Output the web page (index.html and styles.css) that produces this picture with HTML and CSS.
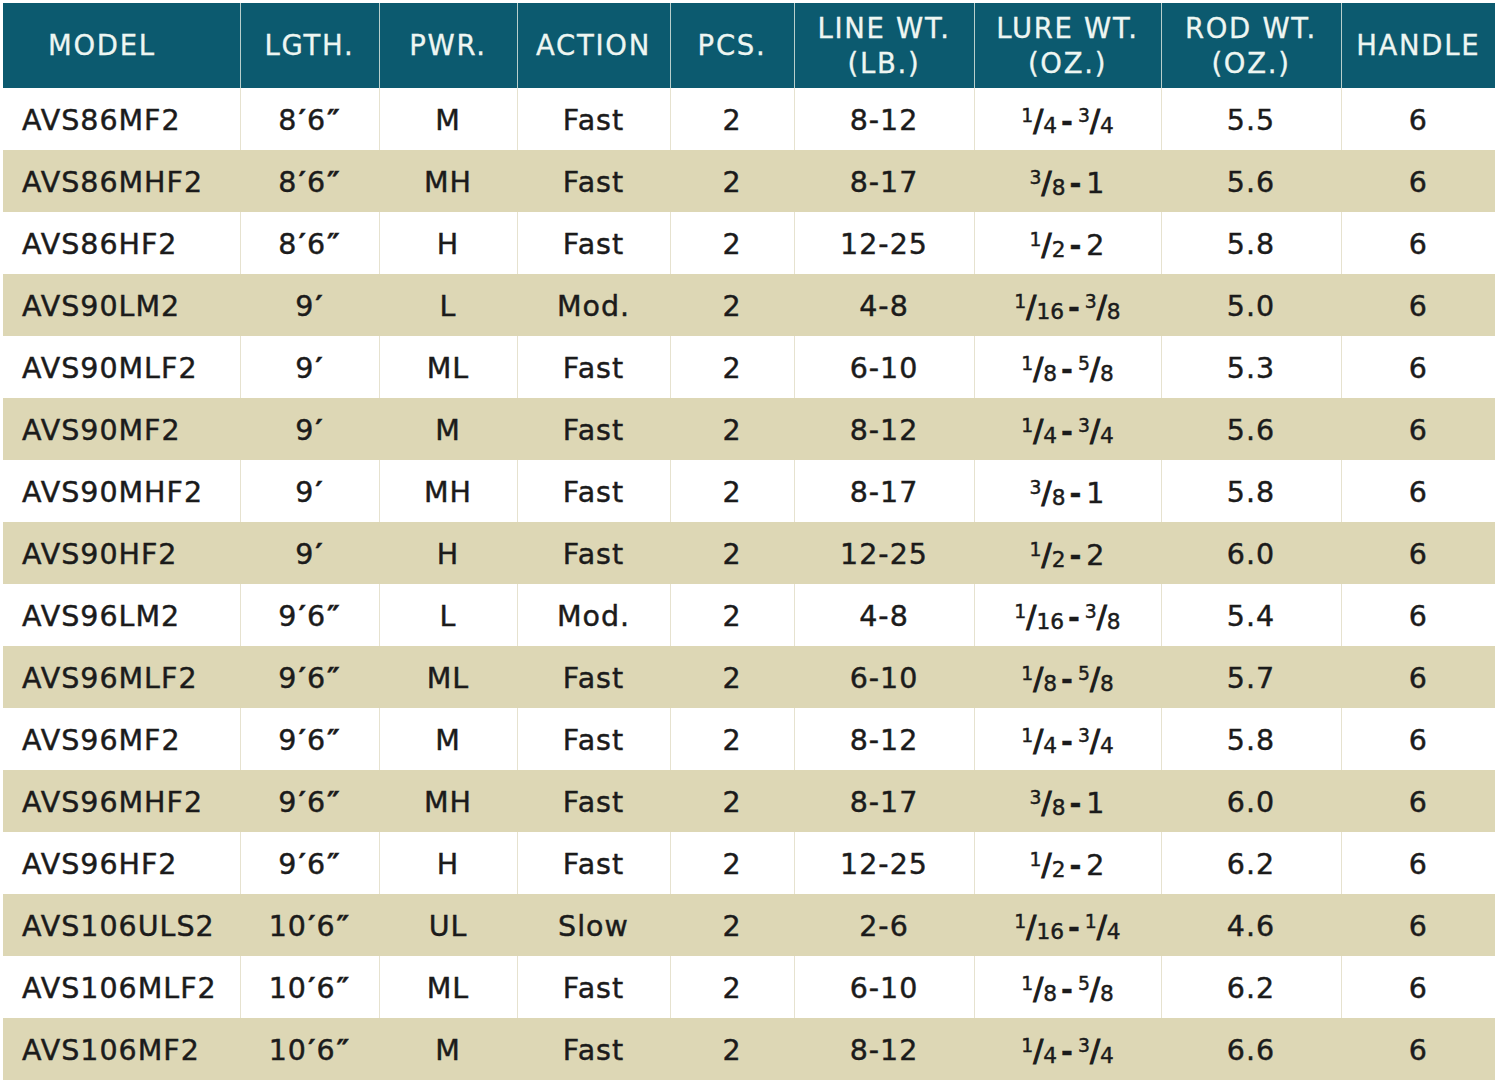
FILE: index.html
```html
<!DOCTYPE html>
<html>
<head>
<meta charset="utf-8">
<link rel="stylesheet" href="styles.css">
</head>
<body>
<table class="specs">
<colgroup>
<col class="c1"><col class="c2"><col class="c3"><col class="c4"><col class="c5"><col class="c6"><col class="c7"><col class="c8"><col class="c9">
</colgroup>
<thead>
<tr>
<th class="left">MODEL</th><th>LGTH.</th><th>PWR.</th><th>ACTION</th><th>PCS.</th><th>LINE WT.<br>(LB.)</th><th>LURE WT.<br>(OZ.)</th><th>ROD WT.<br>(OZ.)</th><th>HANDLE</th>
</tr>
</thead>
<tbody>
<tr><td class="left">AVS86MF2</td><td>8<span class="pr">′</span>6<span class="pr">″</span></td><td>M</td><td>Fast</td><td>2</td><td>8-12</td><td><span class="fr"><span class="nu">1</span><span class="sl">/</span><span class="de">4</span></span><span class="dash">-</span><span class="fr"><span class="nu">3</span><span class="sl">/</span><span class="de">4</span></span></td><td>5.5</td><td>6</td></tr>
<tr><td class="left">AVS86MHF2</td><td>8<span class="pr">′</span>6<span class="pr">″</span></td><td>MH</td><td>Fast</td><td>2</td><td>8-17</td><td><span class="fr"><span class="nu">3</span><span class="sl">/</span><span class="de">8</span></span><span class="dash">-</span>1</td><td>5.6</td><td>6</td></tr>
<tr><td class="left">AVS86HF2</td><td>8<span class="pr">′</span>6<span class="pr">″</span></td><td>H</td><td>Fast</td><td>2</td><td>12-25</td><td><span class="fr"><span class="nu">1</span><span class="sl">/</span><span class="de">2</span></span><span class="dash">-</span>2</td><td>5.8</td><td>6</td></tr>
<tr><td class="left">AVS90LM2</td><td>9<span class="pr">′</span></td><td>L</td><td>Mod.</td><td>2</td><td>4-8</td><td><span class="fr"><span class="nu">1</span><span class="sl">/</span><span class="de">16</span></span><span class="dash">-</span><span class="fr"><span class="nu">3</span><span class="sl">/</span><span class="de">8</span></span></td><td>5.0</td><td>6</td></tr>
<tr><td class="left">AVS90MLF2</td><td>9<span class="pr">′</span></td><td>ML</td><td>Fast</td><td>2</td><td>6-10</td><td><span class="fr"><span class="nu">1</span><span class="sl">/</span><span class="de">8</span></span><span class="dash">-</span><span class="fr"><span class="nu">5</span><span class="sl">/</span><span class="de">8</span></span></td><td>5.3</td><td>6</td></tr>
<tr><td class="left">AVS90MF2</td><td>9<span class="pr">′</span></td><td>M</td><td>Fast</td><td>2</td><td>8-12</td><td><span class="fr"><span class="nu">1</span><span class="sl">/</span><span class="de">4</span></span><span class="dash">-</span><span class="fr"><span class="nu">3</span><span class="sl">/</span><span class="de">4</span></span></td><td>5.6</td><td>6</td></tr>
<tr><td class="left">AVS90MHF2</td><td>9<span class="pr">′</span></td><td>MH</td><td>Fast</td><td>2</td><td>8-17</td><td><span class="fr"><span class="nu">3</span><span class="sl">/</span><span class="de">8</span></span><span class="dash">-</span>1</td><td>5.8</td><td>6</td></tr>
<tr><td class="left">AVS90HF2</td><td>9<span class="pr">′</span></td><td>H</td><td>Fast</td><td>2</td><td>12-25</td><td><span class="fr"><span class="nu">1</span><span class="sl">/</span><span class="de">2</span></span><span class="dash">-</span>2</td><td>6.0</td><td>6</td></tr>
<tr><td class="left">AVS96LM2</td><td>9<span class="pr">′</span>6<span class="pr">″</span></td><td>L</td><td>Mod.</td><td>2</td><td>4-8</td><td><span class="fr"><span class="nu">1</span><span class="sl">/</span><span class="de">16</span></span><span class="dash">-</span><span class="fr"><span class="nu">3</span><span class="sl">/</span><span class="de">8</span></span></td><td>5.4</td><td>6</td></tr>
<tr><td class="left">AVS96MLF2</td><td>9<span class="pr">′</span>6<span class="pr">″</span></td><td>ML</td><td>Fast</td><td>2</td><td>6-10</td><td><span class="fr"><span class="nu">1</span><span class="sl">/</span><span class="de">8</span></span><span class="dash">-</span><span class="fr"><span class="nu">5</span><span class="sl">/</span><span class="de">8</span></span></td><td>5.7</td><td>6</td></tr>
<tr><td class="left">AVS96MF2</td><td>9<span class="pr">′</span>6<span class="pr">″</span></td><td>M</td><td>Fast</td><td>2</td><td>8-12</td><td><span class="fr"><span class="nu">1</span><span class="sl">/</span><span class="de">4</span></span><span class="dash">-</span><span class="fr"><span class="nu">3</span><span class="sl">/</span><span class="de">4</span></span></td><td>5.8</td><td>6</td></tr>
<tr><td class="left">AVS96MHF2</td><td>9<span class="pr">′</span>6<span class="pr">″</span></td><td>MH</td><td>Fast</td><td>2</td><td>8-17</td><td><span class="fr"><span class="nu">3</span><span class="sl">/</span><span class="de">8</span></span><span class="dash">-</span>1</td><td>6.0</td><td>6</td></tr>
<tr><td class="left">AVS96HF2</td><td>9<span class="pr">′</span>6<span class="pr">″</span></td><td>H</td><td>Fast</td><td>2</td><td>12-25</td><td><span class="fr"><span class="nu">1</span><span class="sl">/</span><span class="de">2</span></span><span class="dash">-</span>2</td><td>6.2</td><td>6</td></tr>
<tr><td class="left">AVS106ULS2</td><td>10<span class="pr">′</span>6<span class="pr">″</span></td><td>UL</td><td>Slow</td><td>2</td><td>2-6</td><td><span class="fr"><span class="nu">1</span><span class="sl">/</span><span class="de">16</span></span><span class="dash">-</span><span class="fr"><span class="nu">1</span><span class="sl">/</span><span class="de">4</span></span></td><td>4.6</td><td>6</td></tr>
<tr><td class="left">AVS106MLF2</td><td>10<span class="pr">′</span>6<span class="pr">″</span></td><td>ML</td><td>Fast</td><td>2</td><td>6-10</td><td><span class="fr"><span class="nu">1</span><span class="sl">/</span><span class="de">8</span></span><span class="dash">-</span><span class="fr"><span class="nu">5</span><span class="sl">/</span><span class="de">8</span></span></td><td>6.2</td><td>6</td></tr>
<tr><td class="left">AVS106MF2</td><td>10<span class="pr">′</span>6<span class="pr">″</span></td><td>M</td><td>Fast</td><td>2</td><td>8-12</td><td><span class="fr"><span class="nu">1</span><span class="sl">/</span><span class="de">4</span></span><span class="dash">-</span><span class="fr"><span class="nu">3</span><span class="sl">/</span><span class="de">4</span></span></td><td>6.6</td><td>6</td></tr>
</tbody>
</table>
</body>
</html>
```
FILE: styles.css
```css
html, body {
  margin: 0;
  padding: 0;
  background: #ffffff;
}
body {
  padding: 3px 0 0 3px;
  font-family: "DejaVu Sans", "Liberation Sans", sans-serif;
}
.specs {
  border-collapse: collapse;
  table-layout: fixed;
  width: 1492px;
}
.c1 { width: 237px; }
.c2 { width: 139px; }
.c3 { width: 138px; }
.c4 { width: 153px; }
.c5 { width: 124px; }
.c6 { width: 180px; }
.c7 { width: 187px; }
.c8 { width: 180px; }
.c9 { width: 154px; }

.specs th {
  background: #0c5a6f;
  color: #eef6f2;
  font-weight: normal;
  font-size: 27.5px;
  letter-spacing: 1.7px;
  line-height: 35px;
  height: 85px;
  padding: 0;
  text-align: center;
  vertical-align: middle;
  border-left: 1px solid #b9cfcc;
  white-space: nowrap;
  -webkit-text-stroke: 0.3px #eef6f2;
}
.specs th:first-child { border-left: none; }
.specs th.left { text-align: left; padding-left: 45px; }

.specs td {
  height: 62px;
  padding: 3px 0 0 0;
  box-sizing: border-box;
  font-size: 28.5px;
  letter-spacing: 1px;
  color: #1b1b1b;
  text-align: center;
  vertical-align: middle;
  border-left: 1px solid #e6e2cf;
  white-space: nowrap;
  -webkit-text-stroke: 0.45px #1b1b1b;
}
.specs td:first-child { border-left: none; }
.specs td.left { text-align: left; padding-left: 19px; }

.specs tbody tr:nth-child(even) td {
  background: #ddd7b5;
  border-left-color: #ddd7b5;
}

.pr {
  font-weight: bold;
  letter-spacing: 0;
  margin: 0 1px;
}
.fr { letter-spacing: 0; }
.nu {
  font-size: 0.66em;
  vertical-align: 0.46em;
}
.sl {
  font-size: 1.05em;
  -webkit-text-stroke: 1px #1b1b1b;
}
.de {
  font-size: 0.76em;
  vertical-align: -0.08em;
}
.dash { margin: 0 4px; font-weight: bold; }
```
